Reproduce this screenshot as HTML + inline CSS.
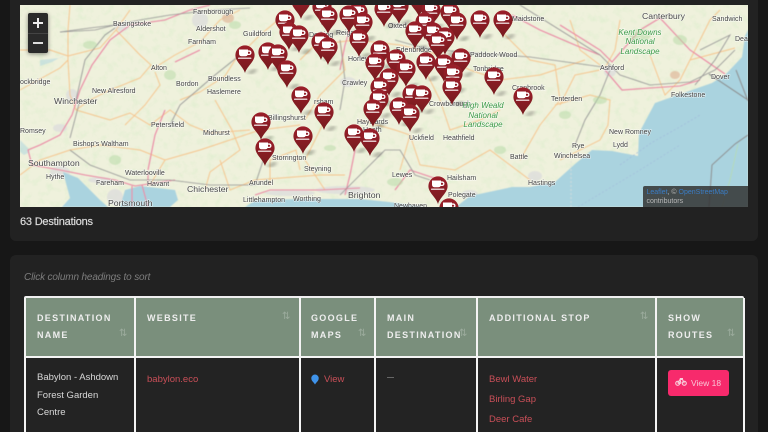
<!DOCTYPE html>
<html lang="en"><head><meta charset="utf-8"><title>Destinations</title>
<style>
html,body{margin:0;padding:0;width:768px;height:432px;overflow:hidden;background:#171717;font-family:"Liberation Sans",sans-serif}
#root{position:absolute;left:0;top:0;width:768px;height:432px;overflow:hidden;background:#171717}
.a{position:absolute;white-space:nowrap}
.card{position:absolute;left:10px;width:748px;background:#222;border-radius:6px}
#map{position:absolute;left:20px;top:5px;width:728px;height:202px;overflow:hidden;background:#eff1dc}
#map svg{position:absolute;left:-20px;top:-5px}
.l text{font:7px "Liberation Sans",sans-serif;fill:#444;paint-order:stroke;stroke:rgba(255,255,255,.6);stroke-width:1.2px}
.l text.b{font-size:8.7px;fill:#484848}
.l text.g{font:italic 8px "Liberation Sans",sans-serif;fill:#3a9a46;text-anchor:middle}
.th{position:absolute;top:298px;height:58px;background:#7a8f7c;color:#eee;font-weight:bold;font-size:9px;letter-spacing:1.3px;line-height:17px}
.th span{position:absolute;white-space:nowrap}
.s{position:absolute;color:rgba(255,255,255,.25);font:10px "DejaVu Sans",sans-serif;letter-spacing:0;font-style:normal}
.v{position:absolute;background:#f4f4f4;width:2px;top:297px;height:135px}
.t{position:absolute;white-space:nowrap;font-size:9.5px}
.lk{color:#c94f58}
</style></head><body><div id="root">
<div class="card" style="top:-10px;height:251px"></div>
<div class="card" style="top:255px;height:177px;border-radius:6px 6px 0 0"></div>

<div id="map">
<svg width="768" height="432" viewBox="0 0 768 432" xmlns="http://www.w3.org/2000/svg">
<defs>
<filter id="tx" x="0" y="0" width="100%" height="100%"><feTurbulence type="fractalNoise" baseFrequency="0.13" numOctaves="3" seed="7"/><feColorMatrix values="0 0 0 0 .68  0 0 0 0 .84  0 0 0 0 .58  2.2 0 0 0 -1.05"/></filter>
<filter id="bl"><feGaussianBlur stdDeviation="0.42"/></filter>
<filter id="bt"><feGaussianBlur stdDeviation="0.22"/></filter>
<filter id="sh"><feGaussianBlur stdDeviation="1.6"/></filter>
<linearGradient id="pg" x1="0" y1="0" x2="0" y2="1"><stop offset="0" stop-color="#9b1f2a"/><stop offset="1" stop-color="#761a1e"/></linearGradient>
<g id="p">
<path d="M1 0 L9 -4 L13 -3 L7 1Z" fill="#000" opacity=".3" filter="url(#sh)"/>
<path d="M0 0C-2-7-9.6-11-9.6-18A9.6 9.6 0 1 1 9.6-18C9.6-11 2-7 0 0Z" fill="url(#pg)"/>
<path d="M-6-23.5H3V-22.6H4.4C7.2-22.6 7.2-18 4.4-18H2.6C2-17 1.4-16.8.4-16.8H-3.6C-5.2-16.8-6-18-6-19.6ZM3-21.3V-19.3H4.2C5.5-19.3 5.5-21.3 4.2-21.3Z" fill="#fff" fill-rule="evenodd"/>
<rect x="-7" y="-15.4" width="13.4" height="1.2" rx=".6" fill="#fff"/>
</g>
</defs>
<rect x="0" y="0" width="768" height="432" fill="#eff1dc"/>
<rect x="20" y="5" width="728" height="202" filter="url(#tx)" opacity=".55"/>
<g filter="url(#bl)">
<!-- urban -->
<g fill="#dcdcdc" opacity=".75">
<ellipse cx="72" cy="95" rx="6" ry="6"/><ellipse cx="122" cy="27" rx="7" ry="4"/><ellipse cx="200" cy="20" rx="8" ry="8"/><ellipse cx="60" cy="172" rx="10" ry="6"/><ellipse cx="100" cy="180" rx="12" ry="3"/><ellipse cx="345" cy="190" rx="30" ry="4"/><ellipse cx="290" cy="193" rx="25" ry="3"/><ellipse cx="610" cy="72" rx="6" ry="5"/><ellipse cx="535" cy="176" rx="7" ry="5"/><ellipse cx="348" cy="82" rx="8" ry="5"/><ellipse cx="470" cy="194" rx="8" ry="4"/><ellipse cx="60" cy="128" rx="7" ry="4"/><ellipse cx="115" cy="197" rx="8" ry="8"/>
</g>
<!-- water -->
<path d="M748 5V30L745 36 742 57 725 75 712 83 672 97 655 103 639 133 638 156 612 151 592 150 575 164 555 182 530 187 512 187 470 196 456 207 426 207 389 202 360 199 300 199 256 200 245 207H748Z" fill="#aad3df"/>
<path d="M120 207L125 190 140 186 175 190 178 200 170 207Z" fill="#aad3df"/>
<path d="M63 172L78 178 100 200 108 207 62 207 70 198Z" fill="#aad3df"/>
<path d="M20 140L28 148 30 152 24 155 20 152ZM40 60L60 58 70 52 52 62 40 66Z" fill="#aad3df" opacity=".5"/>
<path d="M620 165L651 143 678 128 700 115" fill="none" stroke="#9fb8dc" stroke-width=".7" stroke-dasharray="2 2"/>
<path d="M578 207L640 170 680 145" fill="none" stroke="#9fb8dc" stroke-width=".6" stroke-dasharray="2 2"/>
<path d="M571 145V207" fill="none" stroke="#ddd" stroke-width=".7" stroke-dasharray="2 2"/>
<path d="M736 70L748 101M709 74L748 100M709 207L712 165 735 144 748 135" fill="none" stroke="#8f8f8f" stroke-width="1.1"/>
<path d="M738 144L730 180 722 207" fill="none" stroke="#b6dcb0" stroke-width=".8"/>
<!-- orange roads -->
<g fill="none" stroke="#f6c48c" stroke-width=".95">
<path d="M70 5L68 30 68 60 70 95 76 110 110 120 130 113 150 125 170 110 190 125 210 133 250 130"/>
<path d="M20 50L50 50 68 56 100 48 116 30 130 10"/>
<path d="M116 30L140 55 151 65 140 78 110 90 90 100 76 110"/>
<path d="M151 70L175 55 200 42 220 20 240 10"/>
<path d="M155 72L160 85 145 105 125 125"/>
<path d="M180 100L200 92 225 76 235 60 260 35 290 10"/>
<path d="M215 100L232 130 240 150 210 172 205 190"/>
<path d="M20 90L60 68 68 60"/>
<path d="M300 60L315 45 355 40 400 45 440 55 470 70 500 80 540 75 585 60"/>
<path d="M305 120L320 95 345 70 340 40"/>
<path d="M300 170L296 150 270 160 270 185M325 120L305 160 325 190"/>
<path d="M410 135L420 165 455 170 490 150 510 165 530 180"/>
<path d="M500 30L530 60 555 65 560 100 540 125 520 160"/>
<path d="M555 105L590 95 610 100 608 125 600 140 560 160"/>
<path d="M650 55L665 95 680 80 690 60 710 20 720 10M690 60L735 48"/>
<path d="M620 20L615 50 605 68"/>
<path d="M570 20L580 50 600 65M560 105L575 75 600 70"/>
<path d="M20 175L40 160 70 150 100 145 140 150 165 160 200 150 260 130 300 125"/>
<path d="M165 160L150 185M220 160L230 190 255 180 320 175 345 175"/>
<path d="M420 60L440 100 450 130 480 120 500 110"/>
<path d="M360 120L395 130 410 135 400 170"/>
</g>
<!-- pink trunk roads -->
<g fill="none" stroke="#ea85a2" stroke-width="1.1">
<path d="M80 90L92 65 110 40 130 25 165 20 190 10 210 5"/>
<path d="M80 90L72 115 60 135 40 145 28 150 32 165 60 170 85 175 115 180 135 186 175 180"/>
<path d="M132 186V207M142 185L148 207M148 172L148 183"/>
<path d="M148 170L155 135 165 110M200 50L175 62"/>
<path d="M340 70L345 45 352 22 365 5"/>
<path d="M605 70L622 90 650 88 680 86 700 80"/>
<path d="M560 25L600 50 612 62 640 30 660 18 690 50 725 74"/>
<path d="M512 15L540 30 575 45 600 55"/>
<path d="M345 195L350 175 355 150 358 125"/>
<path d="M440 180L410 170 395 190"/>
<path d="M255 195L270 190 320 190 360 188"/>
</g>
<!-- rail -->
<g fill="none" stroke="#959595" stroke-width=".85">
<path d="M60 32L90 28 115 25 140 20 170 15 215 10 250 8"/>
<path d="M60 32L95 30 115 25"/>
<path d="M76 100L85 60 105 35 115 28"/>
<path d="M70 138L80 100"/>
<path d="M170 125L180 105 215 75 240 55"/>
<path d="M395 40L420 47 460 52 530 57 610 68"/>
<path d="M520 5L560 30 600 55 620 75 650 85 690 82 715 70 735 50"/>
<path d="M610 70L600 95 585 120 575 145"/>
<path d="M340 110L345 80 340 40"/>
<path d="M340 195L365 170 385 150 400 150 415 175 430 180"/>
<path d="M265 155L255 185 210 185 170 180 130 180 90 165 70 150"/>
<path d="M700 50L730 35 715 60 695 85"/>
</g>
<g fill="#b5d9a6" opacity=".5">
<ellipse cx="235" cy="25" rx="6" ry="4"/><ellipse cx="640" cy="35" rx="11" ry="6"/><ellipse cx="600" cy="100" rx="7" ry="4"/><ellipse cx="90" cy="45" rx="7" ry="4"/><ellipse cx="115" cy="160" rx="6" ry="5"/><ellipse cx="395" cy="182" rx="8" ry="4"/><ellipse cx="500" cy="150" rx="6" ry="4"/><ellipse cx="565" cy="115" rx="6" ry="4"/><ellipse cx="680" cy="40" rx="7" ry="5"/><ellipse cx="170" cy="75" rx="6" ry="5"/><ellipse cx="330" cy="148" rx="6" ry="3"/>
</g>
<ellipse cx="675" cy="75" rx="5" ry="4" fill="#e0b89a" opacity=".7"/><ellipse cx="228" cy="18" rx="6" ry="5" fill="#e0b89a" opacity=".7"/>
</g>
<g class="l" filter="url(#bt)">
<text x="113" y="26">Basingstoke</text><text x="193" y="14">Farnborough</text><text x="196" y="31">Aldershot</text><text x="188" y="44">Farnham</text><text x="243" y="36">Guildford</text><text x="151" y="70">Alton</text><text x="176" y="86">Bordon</text><text x="208" y="81">Boundless</text><text x="207" y="94">Haslemere</text><text x="92" y="93">New Alresford</text><text class="b" x="54" y="104">Winchester</text><text x="20" y="84">ockbridge</text><text x="151" y="127">Petersfield</text><text x="203" y="135">Midhurst</text><text x="20" y="133">Romsey</text><text x="73" y="146">Bishop's Waltham</text>
<text x="396" y="52">Edenbridge</text><text x="314" y="104">rsham</text><text x="342" y="85">Crawley</text><text x="268" y="120">Billingshurst</text><text x="357" y="124">Haywards</text><text x="363" y="132">Heath</text><text x="409" y="140">Uckfield</text><text x="443" y="140">Heathfield</text><text x="429" y="106">Crowborough</text><text x="473" y="71">Tonbridge</text><text x="470" y="57">Paddock Wood</text><text x="336" y="35">Reigate</text><text x="388" y="28">Oxted</text><text x="309" y="37">Dorking</text><text x="348" y="61">Horley</text>
<text class="g" x="483" y="108">High Weald</text><text class="g" x="483" y="118">National</text><text class="g" x="483" y="127">Landscape</text>
<text x="512" y="21">Maidstone</text><text class="b" x="642" y="19">Canterbury</text><text x="712" y="21">Sandwich</text><text x="735" y="41">Deal</text>
<text class="g" x="640" y="35">Kent Downs</text><text class="g" x="640" y="44">National</text><text class="g" x="640" y="54">Landscape</text>
<text x="600" y="70">Ashford</text><text x="711" y="79">Dover</text><text x="671" y="97">Folkestone</text><text x="512" y="90">Cranbrook</text><text x="551" y="101">Tenterden</text><text x="609" y="134">New Romney</text><text x="613" y="147">Lydd</text><text x="572" y="148">Rye</text>
<text class="b" x="28" y="166">Southampton</text><text x="46" y="179">Hythe</text><text x="125" y="175">Waterlooville</text><text x="96" y="185">Fareham</text><text x="147" y="186">Havant</text><text class="b" x="187" y="192">Chichester</text><text class="b" x="108" y="206">Portsmouth</text><text x="243" y="202">Littlehampton</text><text x="293" y="201">Worthing</text><text x="304" y="171">Steyning</text><text x="272" y="160">Storrington</text><text x="249" y="185">Arundel</text><text x="392" y="177">Lewes</text><text x="447" y="180">Hailsham</text><text x="448" y="197">Polegate</text><text class="b" x="348" y="198">Brighton</text><text x="394" y="208">Newhaven</text><text x="528" y="185">Hastings</text><text x="554" y="158">Winchelsea</text><text x="510" y="159">Battle</text>
</g>
<use href="#p" x="419" y="17"/><use href="#p" x="301" y="19"/><use href="#p" x="399" y="24"/><use href="#p" x="322" y="25"/><use href="#p" x="384" y="27"/><use href="#p" x="431" y="28"/><use href="#p" x="358" y="30"/><use href="#p" x="450" y="30"/><use href="#p" x="349" y="33"/><use href="#p" x="328" y="34"/><use href="#p" x="285" y="38"/><use href="#p" x="480" y="38"/><use href="#p" x="503" y="38"/><use href="#p" x="363" y="40"/><use href="#p" x="425" y="40"/><use href="#p" x="457" y="40"/><use href="#p" x="415" y="49"/><use href="#p" x="289" y="50"/><use href="#p" x="433" y="50"/><use href="#p" x="299" y="53"/><use href="#p" x="445" y="55"/><use href="#p" x="359" y="57"/><use href="#p" x="321" y="60"/><use href="#p" x="438" y="60"/><use href="#p" x="328" y="65"/><use href="#p" x="380" y="68"/><use href="#p" x="268" y="70"/><use href="#p" x="278" y="72"/><use href="#p" x="245" y="73"/><use href="#p" x="461" y="76"/><use href="#p" x="396" y="77"/><use href="#p" x="426" y="80"/><use href="#p" x="375" y="81"/><use href="#p" x="444" y="82"/><use href="#p" x="406" y="87"/><use href="#p" x="287" y="88"/><use href="#p" x="453" y="92"/><use href="#p" x="494" y="95"/><use href="#p" x="389" y="96"/><use href="#p" x="380" y="105"/><use href="#p" x="452" y="105"/><use href="#p" x="412" y="112"/><use href="#p" x="422" y="113"/><use href="#p" x="301" y="114"/><use href="#p" x="523" y="115"/><use href="#p" x="379" y="117"/><use href="#p" x="399" y="125"/><use href="#p" x="373" y="127"/><use href="#p" x="324" y="130"/><use href="#p" x="410" y="132"/><use href="#p" x="261" y="140"/><use href="#p" x="354" y="152"/><use href="#p" x="303" y="154"/><use href="#p" x="370" y="156"/><use href="#p" x="265" y="166"/><use href="#p" x="438" y="204"/><use href="#p" x="449" y="226"/>
</svg>
<div class="a" style="left:8px;top:8px;width:20px;height:40px;background:#2a2a2a;border-radius:2px;box-shadow:0 1px 4px rgba(0,0,0,.45)">
<div style="position:absolute;left:0;top:19.5px;width:20px;height:1px;background:#444"></div>
<div style="position:absolute;left:5px;top:9.2px;width:10px;height:2px;background:#eee"></div>
<div style="position:absolute;left:9px;top:5.2px;width:2px;height:10px;background:#eee"></div>
<div style="position:absolute;left:5px;top:29.2px;width:10px;height:2px;background:#ddd"></div>
</div>
<div class="a" style="left:623px;top:181px;width:105px;height:21px;background:rgba(50,50,50,.85);border-radius:2px 0 0 0;font-size:7px;line-height:9.5px;color:#b8b8b8;padding:1.5px 0 0 3.5px;box-sizing:border-box"><span style="color:#3a7cc4">Leaflet</span>, © <span style="color:#3a7cc4">OpenStreetMap</span><br>contributors</div>
</div>

<div class="a" style="left:20px;top:215px;font-size:11px;line-height:15px;color:#dcdcdc;letter-spacing:-.2px;-webkit-text-stroke:.2px #dcdcdc">63 Destinations</div>
<div class="a" style="left:24px;top:271px;font-size:10px;line-height:13px;font-style:italic;letter-spacing:-.15px;color:#7d7d7d">Click column headings to sort</div>

<!-- table -->
<div class="a" style="left:24px;top:296px;width:720px;height:2px;background:#f0f0f0;border-radius:3px 3px 0 0"></div>
<div class="a" style="left:24px;top:356px;width:720px;height:2px;background:#f4f4f4"></div>
<div class="a" style="left:26px;top:358px;width:717px;height:74px;background:#232323"></div>

<div class="th" style="left:26px;width:108px"><span style="left:11px;top:12px">DESTINATION<br>NAME</span><i class="s" style="left:93px;top:30px">⇅</i></div>
<div class="th" style="left:136px;width:163px"><span style="left:11px;top:12px">WEBSITE</span><i class="s" style="left:146px;top:13px">⇅</i></div>
<div class="th" style="left:301px;width:73px"><span style="left:10px;top:12px">GOOGLE<br>MAPS</span><i class="s" style="left:57px;top:30px">⇅</i></div>
<div class="th" style="left:376px;width:100px"><span style="left:11px;top:12px">MAIN<br>DESTINATION</span><i class="s" style="left:83px;top:30px">⇅</i></div>
<div class="th" style="left:478px;width:177px"><span style="left:11px;top:12px">ADDITIONAL STOP</span><i class="s" style="left:162px;top:13px">⇅</i></div>
<div class="th" style="left:657px;width:86px"><span style="left:11px;top:12px">SHOW<br>ROUTES</span><i class="s" style="left:70px;top:30px">⇅</i></div>

<div class="v" style="left:24px;top:298px"></div>
<div class="v" style="left:134px"></div>
<div class="v" style="left:299px"></div>
<div class="v" style="left:374px"></div>
<div class="v" style="left:476px"></div>
<div class="v" style="left:655px"></div>
<div class="v" style="left:743px;top:298px"></div>

<div class="t" style="left:37px;top:369px;line-height:17.6px;color:#d8d8d8">Babylon - Ashdown<br>Forest Garden<br>Centre</div>
<div class="t lk" style="left:147px;top:373px;line-height:13px">babylon.eco</div>
<svg class="a" style="left:311px;top:374px" width="8" height="11" viewBox="0 0 8 11"><path d="M4 10.5C3 8.5.3 7 .3 4.2A3.7 3.7 0 0 1 7.7 4.2C7.7 7 5 8.5 4 10.5Z" fill="#3f93ea"/></svg>
<div class="t lk" style="left:324px;top:373px;line-height:13px">View</div>
<div class="a" style="left:387px;top:377px;width:7px;height:1.2px;background:#666"></div>
<div class="t lk" style="left:489px;top:373px;line-height:13px">Bewl Water</div>
<div class="t lk" style="left:489px;top:393px;line-height:13px">Birling Gap</div>
<div class="t lk" style="left:489px;top:413px;line-height:13px">Deer Cafe</div>

<div class="a" style="left:668px;top:370px;width:61px;height:26px;background:#f72a6c;border-radius:3px"></div>
<svg class="a" style="left:675px;top:377px" width="12" height="10" viewBox="0 0 12 10" fill="none" stroke="#f8cfdc" stroke-width="1.1"><circle cx="2.7" cy="6.3" r="2"/><circle cx="9.3" cy="6.3" r="2"/><path d="M2.7 6.3L5 2.5H7.5L9.3 6.3M6 6.3L5 2.5M6 6.3H2.7M4.8 1.5H8"/></svg>
<div class="t" style="left:691px;top:377px;line-height:12px;font-size:8.5px;color:#f8c5d5">View 18</div>
</div></body></html>
